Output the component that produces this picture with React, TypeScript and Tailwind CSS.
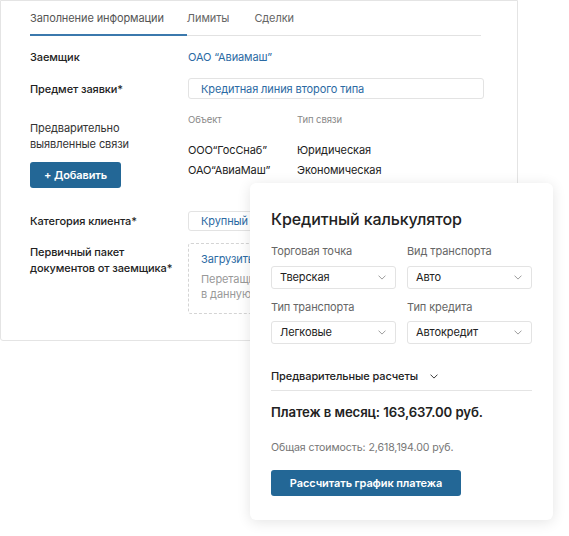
import React from "react";

const font = { fontFamily: "Inter, 'Noto Sans', sans-serif" };

function Chevron({ className = "" }: { className?: string }) {
	return (
		<svg viewBox="0 0 10 6" className={className} fill="none">
			<path d="M1 1l4 4 4-4" stroke="currentColor" strokeWidth="1.2" strokeLinecap="round" strokeLinejoin="round" />
		</svg>
	);
}

function Select({ value }: { value: string }) {
	return (
		<div className="flex h-[23px] items-center justify-between rounded-[3px] border border-[#e3e3e3] pl-[8px] pr-[9px] text-[11px] text-[#222]">
			<span>{value}</span>
			<Chevron className="h-[5px] w-[8px] text-[#999]" />
		</div>
	);
}

function Tabs() {
	return (
		<div className="mr-[36px] flex border-b border-[#e2e2e2] text-[11px] leading-[15px] tracking-[-0.1px]">
			<div className="-mb-px border-b-2 border-[#3b79ad] pb-[8px] pr-[23px] pt-[10px] text-[#555]">
				Заполнение информации
			</div>
			<div className="pb-[8px] pr-[25px] pt-[10px] text-[#666]">Лимиты</div>
			<div className="pb-[8px] pt-[10px] text-[#666]">Сделки</div>
		</div>
	);
}

function ApplicationForm() {
	return (
		<div className="h-[341px] w-[518px] rounded-b-[3px] border border-[#e4e4e4] pl-[29px]" style={font}>
			<Tabs />
			<div className="grid grid-cols-[158px_296px] text-[11px] leading-[16px] tracking-[-0.1px]">
				<div className="mt-[13px] font-medium text-[#222]">Заемщик</div>
				<div className="mt-[13px] text-[#2b6aa3]">ОАО “Авиамаш”</div>

				<div className="mt-[13px] flex h-[21px] items-center font-medium text-[#222]">Предмет заявки*</div>
				<div className="mt-[13px] flex h-[21px] items-center rounded-[3px] border border-[#e3e3e3] pl-[12px] text-[#2b6aa3]">
					Кредитная линия второго типа
				</div>

				<div className="mt-[13px] pt-[8px]">
					<div className="text-[#333]">
						Предварительно
						<br />
						выявленные связи
					</div>
					<button className="mt-[10px] h-[26px] w-[91px] rounded-[3px] bg-[#236796] text-[11px] font-semibold text-white">
						+ Добавить
					</button>
				</div>
				<div className="mt-[13px] grid grid-cols-[109px_1fr] content-start pt-[1px] text-[#222]">
					<div className="text-[9.5px] leading-[14px] text-[#888]">Объект</div>
					<div className="text-[9.5px] leading-[14px] text-[#888]">Тип связи</div>
					<div className="mt-[15px]">ООО“ГосСнаб”</div>
					<div className="mt-[15px]">Юридическая</div>
					<div className="mt-[4px]">ОАО“АвиаМаш”</div>
					<div className="mt-[4px]">Экономическая</div>
				</div>

				<div className="mt-[23px] flex h-[20px] items-center font-medium text-[#222]">Категория клиента*</div>
				<div className="mt-[23px] flex h-[20px] items-center rounded-[3px] border border-[#e3e3e3] pl-[12px] text-[#2b6aa3]">
					Крупный сегмент
				</div>

				<div className="mt-[12px] pt-[1px] font-medium text-[#222]">
					Первичный пакет
					<br />
					документов от заемщика*
				</div>
				<div className="mt-[12px] h-[71px] rounded-[3px] border border-dashed border-[#d4d4d4] pl-[12px] pt-[7px]">
					<div className="text-[#2b6aa3]">Загрузить файлы</div>
					<div className="mt-[5px] leading-[15px] text-[#999]">
						Перетащите файлы
						<br />
						в данную область
					</div>
				</div>
			</div>
		</div>
	);
}

function Calculator() {
	return (
		<div
			className="absolute left-[250px] top-[183px] w-[303px] rounded-[6px] bg-white px-[21px] pb-[24px] pt-[25px] tracking-[-0.1px] shadow-[0_2px_14px_rgba(0,0,0,0.11)]"
			style={font}
		>
			<div className="text-[16px] font-medium leading-[22px] text-[#222]">Кредитный калькулятор</div>
			<div className="mt-[13px] grid grid-cols-2 gap-x-[11px] text-[11px]">
				<div>
					<div className="mb-[7px] leading-[16px] text-[#666]">Торговая точка</div>
					<Select value="Тверская" />
				</div>
				<div>
					<div className="mb-[7px] leading-[16px] text-[#666]">Вид транспорта</div>
					<Select value="Авто" />
				</div>
				<div className="mt-[10px]">
					<div className="mb-[6px] leading-[16px] text-[#666]">Тип транспорта</div>
					<Select value="Легковые" />
				</div>
				<div className="mt-[10px]">
					<div className="mb-[6px] leading-[16px] text-[#666]">Тип кредита</div>
					<Select value="Автокредит" />
				</div>
			</div>
			<div className="mt-[24px] flex items-center gap-[12px] border-b border-[#e4e4e4] pb-[6px] text-[11px] font-medium leading-[16px] text-[#222]">
				<span>Предварительные расчеты</span>
				<Chevron className="h-[5px] w-[8px] text-[#333]" />
			</div>
			<div className="mt-[11px] text-[13.2px] font-semibold leading-[20px] text-[#222]">
				Платеж в месяц: 163,637.00 руб.
			</div>
			<div className="mt-[19px] text-[10.6px] leading-[14px] text-[#777]">Общая стоимость: 2,618,194.00 руб.</div>
			<button className="mt-[15px] h-[26px] w-[190px] rounded-[3px] bg-[#236796] text-[11px] font-semibold text-white">
				Рассчитать график платежа
			</button>
		</div>
	);
}

export default function App() {
	return (
		<div className="relative h-[536px] w-[569px] overflow-hidden bg-white">
			<ApplicationForm />
			<Calculator />
		</div>
	);
}
